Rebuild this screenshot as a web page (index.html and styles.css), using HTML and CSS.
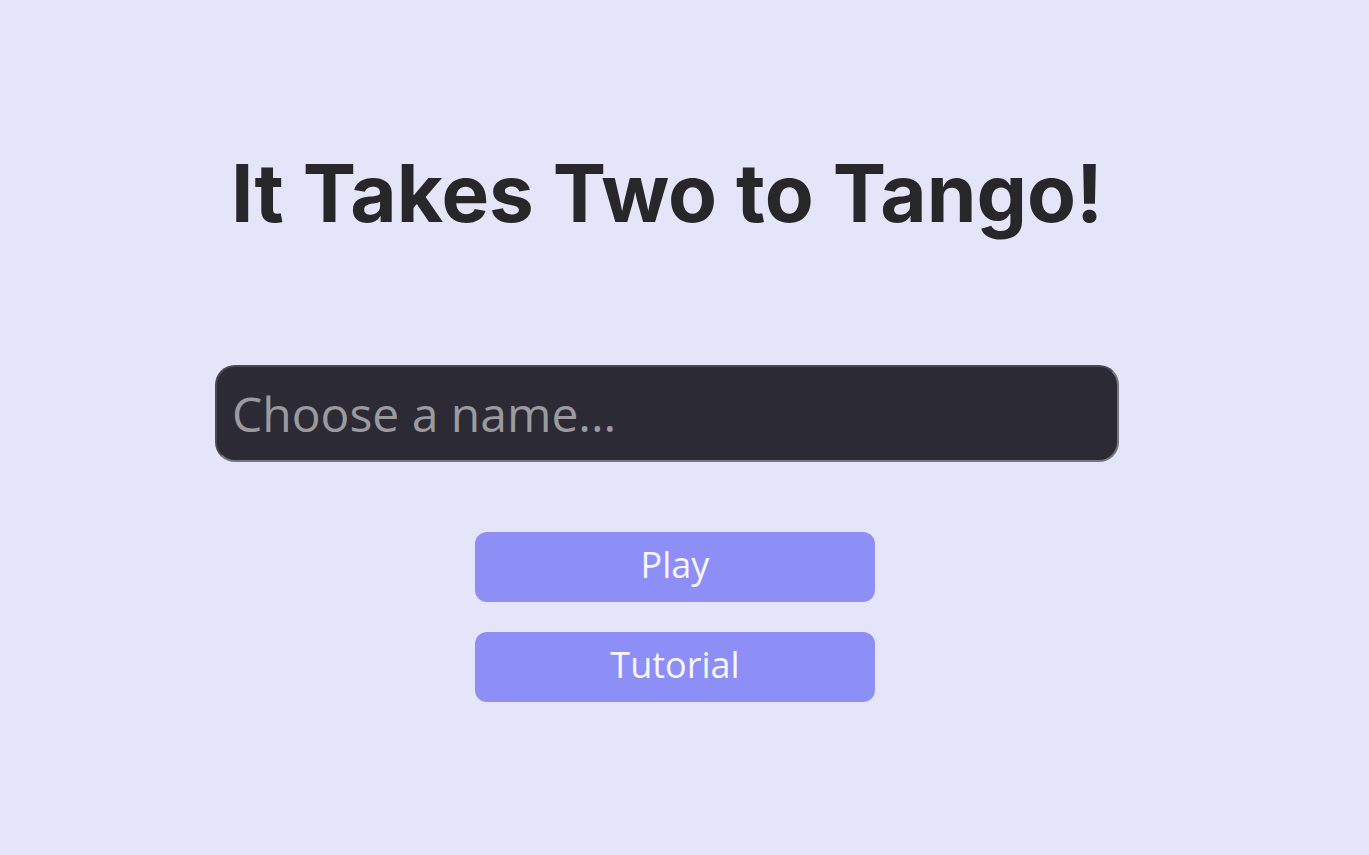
FILE: index.html
```html
<!DOCTYPE html>
<html lang="en">
<head>
<meta charset="utf-8">
<title>It Takes Two to Tango!</title>
<link rel="stylesheet" href="styles.css">
</head>
<body>
<main class="page">
  <h1 class="title">It Takes Two to Tango!</h1>
  <input class="name-input" type="text" placeholder="Choose a name...">
  <div class="actions">
    <button class="btn">Play</button>
    <button class="btn">Tutorial</button>
  </div>
</main>
</body>
</html>
```

FILE: styles.css
```css
html, body {
  margin: 0;
  padding: 0;
  background: #e4e5f9;
  height: 100%;
}
.page {
  display: flex;
  flex-direction: column;
  align-items: flex-start;
  padding-left: 215px;
  padding-top: 143px;
}
.title {
  margin: 0;
  width: 904px;
  text-align: center;
  font-family: Inter, "Liberation Sans", sans-serif;
  font-weight: 700;
  font-size: 80px;
  line-height: 100px;
  color: #27272a;
}
.name-input {
  margin-top: 122px;
  box-sizing: border-box;
  width: 904px;
  height: 97px;
  border: 2px solid;
  border-color: #4a4950 #77767e #77767e #4a4950;
  border-radius: 20px;
  background: #2c2b35;
  color: #e4e4ea;
  font-family: "Open Sans", "Noto Sans", sans-serif;
  font-size: 48px;
  padding: 0 15px;
  outline: none;
}
.name-input::placeholder {
  color: #9b9a9f;
}
.actions {
  margin-top: 70px;
  margin-left: 260px;
  display: flex;
  flex-direction: column;
  gap: 30px;
}
.btn {
  width: 400px;
  height: 70px;
  border: none;
  border-radius: 12px;
  background: #8e8ef7;
  color: #f6f6ff;
  font-family: "Open Sans", "Noto Sans", sans-serif;
  font-size: 36px;
  padding: 0 0 5px;
  cursor: pointer;
}
```
